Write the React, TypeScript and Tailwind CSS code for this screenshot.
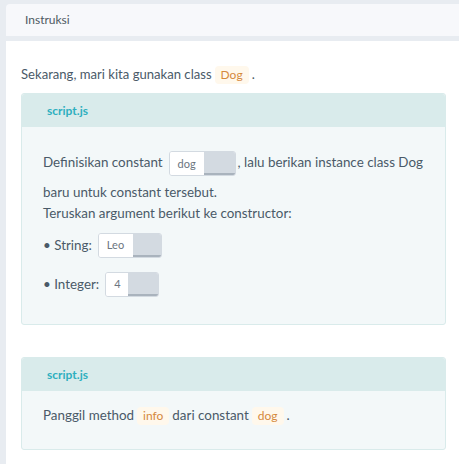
import React from "react";

const Code: React.FC<{ children: React.ReactNode }> = ({ children }) => (
    <span className="inline-block mx-[3px] px-[6px] rounded-[4px] bg-[#fff8ec] text-[#d5893c] text-[12px] leading-[18px]">
        {children}
    </span>
);

const Blank: React.FC<{ value: string; left: number; right: number }> = ({ value, left, right }) => (
    <span className="inline-flex align-middle h-[25px] rounded-[3px] border border-[#d3dae1] overflow-hidden ml-[6px] mr-[2px]">
        <span
            className="flex items-center pl-[8px] bg-white text-[11px] text-[#6b7580]"
            style={{ width: left }}
        >
            {value}
        </span>
        <span className="bg-[#d3dae1] border-b-2 border-[#a9b3bd]" style={{ width: right }} />
    </span>
);

const CardHeader: React.FC = () => (
    <div className="h-[33px] bg-[#d9ebeb] flex items-center px-[25px] rounded-t-[3px]">
        <span className="text-[12px] font-bold text-[#2eafbf]">script.js</span>
    </div>
);

const App: React.FC = () => {
    return (
        <div
            className="w-[459px] h-[464px] bg-[#e8ecf1] pt-[4px] pl-[6px] overflow-hidden text-[#4a5a68]"
            style={{ fontFamily: "Lato, 'Open Sans', sans-serif" }}
        >
            <div className="h-[32px] bg-[#f7f8fb] rounded-tl-[4px] flex items-center pl-[19px] text-[12px] text-[#4e5862]">
                Instruksi
            </div>
            <div className="mt-[5px] bg-white h-[430px] pl-[15px] pr-[13px] pt-[23px]">
                <p className="text-[13.1px] leading-[20px]">
                    Sekarang, mari kita gunakan class<Code>Dog</Code>.
                </p>

                {/* first task */}
                <div className="mt-[9px] rounded-[3px] border border-[#d9ebeb] bg-[#f3f8f9]">
                    <CardHeader />
                    <div className="px-[21px] pt-[20px] pb-[27px] text-[13.4px]">
                        <p className="leading-[30px]">
                            Definisikan constant<Blank value="dog" left={34} right={31} />, lalu berikan instance class Dog
                            baru untuk constant tersebut.
                        </p>
                        <p className="leading-[20px] mt-[-4px]">Teruskan argument berikut ke constructor:</p>
                        <div className="mt-[10px] flex items-center h-[25px]">
                            <span>• String:</span>
                            <Blank value="Leo" left={34} right={28} />
                        </div>
                        <div className="mt-[14px] flex items-center h-[25px]">
                            <span>• Integer:</span>
                            <Blank value="4" left={22} right={30} />
                        </div>
                    </div>
                </div>

                {/* second task */}
                <div className="mt-[32px] rounded-[3px] border border-[#d9ebeb] bg-[#f3f8f9]">
                    <CardHeader />
                    <div className="px-[21px] pt-[14px] pb-[24px] text-[13.4px] leading-[20px]">
                        Panggil method<Code>info</Code>dari constant<Code>dog</Code>.
                    </div>
                </div>
            </div>
        </div>
    );
};

export default App;
